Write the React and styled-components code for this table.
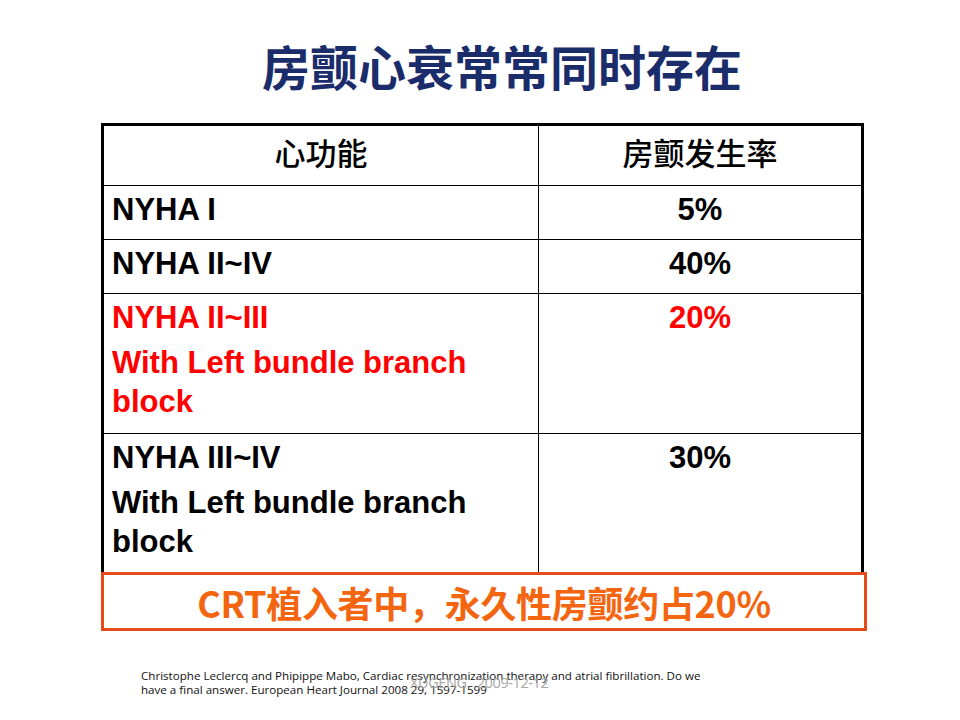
import React from "react";
import styled, { createGlobalStyle } from "styled-components";

const Global = createGlobalStyle`
  html, body { margin: 0; padding: 0; background: #fff; }
  body { font-family: "Liberation Sans", Arial, sans-serif; }
`;

const Page = styled.div`
  width: 960px;
  height: 720px;
  display: flex;
  flex-direction: column;
  overflow: hidden;
  background: #fff;
`;

const Title = styled.h1`
  margin: 35px 0 0 0;
  padding-left: 44px;
  height: 60px;
  line-height: 60px;
  text-align: center;
  font-family: "Noto Sans CJK SC", sans-serif;
  font-weight: 700;
  font-size: 48px;
  color: #1b2c6b;
`;

const Table = styled.div`
  margin: 28px 0 0 101px;
  width: 763px;
  box-sizing: border-box;
  border: 3px solid #000;
  border-bottom: none;
  display: flex;
  flex-direction: column;
`;

const Row = styled.div`
  display: grid;
  grid-template-columns: 434px 1px 322px;
  border-bottom: ${(p) => (p.$last ? "none" : "1px solid #000")};
`;

const Divider = styled.div`
  background: #000;
`;

const HeadCell = styled.div`
  padding: 6px 0 14px;
  text-align: center;
  font-family: "Noto Sans CJK SC", sans-serif;
  font-weight: 500;
  font-size: 31px;
  line-height: 39px;
  color: #000;
`;

const Cell = styled.div`
  padding: 4px 8px ${(p) => (p.$tall ? "12px" : "10px")};
  text-align: ${(p) => (p.$center ? "center" : "left")};
  font-family: "Liberation Sans", Arial, sans-serif;
  font-weight: 700;
  font-size: 31px;
  line-height: 39px;
  color: ${(p) => (p.$red ? "#ff0000" : "#000")};
`;

const Para = styled.p`
  margin: 0;
  & + & { margin-top: 6px; }
`;

const Callout = styled.div`
  margin: -1px 0 0 101px;
  width: 766px;
  height: 59px;
  box-sizing: border-box;
  border: 3px solid #e84b1b;
  display: flex;
  align-items: center;
  justify-content: center;
  font-family: "Noto Sans CJK SC", sans-serif;
  font-weight: 700;
  font-size: 36px;
  color: #f4650f;
  letter-spacing: -0.3px;
`;

const Footnote = styled.div`
  position: relative;
  margin: 38px 0 0 141px;
  font-family: "Open Sans", "Liberation Sans", sans-serif;
  font-size: 11.6px;
  line-height: 14px;
  letter-spacing: 0;
  white-space: nowrap;
  color: #111;
`;

const Watermark = styled.span`
  position: absolute;
  left: 269px;
  top: 7px;
  white-space: pre;
  font-family: "Open Sans", "Liberation Sans", sans-serif;
  font-size: 14.5px;
  letter-spacing: -0.4px;
  color: #a6a6a6;
`;

const rows = [
  { left: ["NYHA I"], right: "5%" },
  { left: ["NYHA II~IV"], right: "40%" },
  { left: ["NYHA II~III", "With Left bundle branch block"], right: "20%", red: true },
  { left: ["NYHA III~IV", "With Left bundle branch block"], right: "30%" },
];

export default function App() {
  return (
    <>
      <Global />
      <Page>
        <Title>房颤心衰常常同时存在</Title>
        <Table>
          <Row>
            <HeadCell>心功能</HeadCell>
            <Divider />
            <HeadCell>房颤发生率</HeadCell>
          </Row>
          {rows.map((r, i) => (
            <Row key={i} $last={i === rows.length - 1}>
              <Cell $red={r.red} $tall={r.left.length > 1}>
                {r.left.map((t, j) => (
                  <Para key={j}>{t}</Para>
                ))}
              </Cell>
              <Divider />
              <Cell $center $red={r.red}>{r.right}</Cell>
            </Row>
          ))}
        </Table>
        <Callout>CRT植入者中，永久性房颤约占20%</Callout>
        <Footnote>
          Christophe Leclercq and Phipippe Mabo, Cardiac resynchronization therapy and atrial fibrillation. Do we
          <br />
          have a final answer. European Heart Journal 2008 29, 1597-1599
          <Watermark>{"XUGENG   2009-12-12"}</Watermark>
        </Footnote>
      </Page>
    </>
  );
}
